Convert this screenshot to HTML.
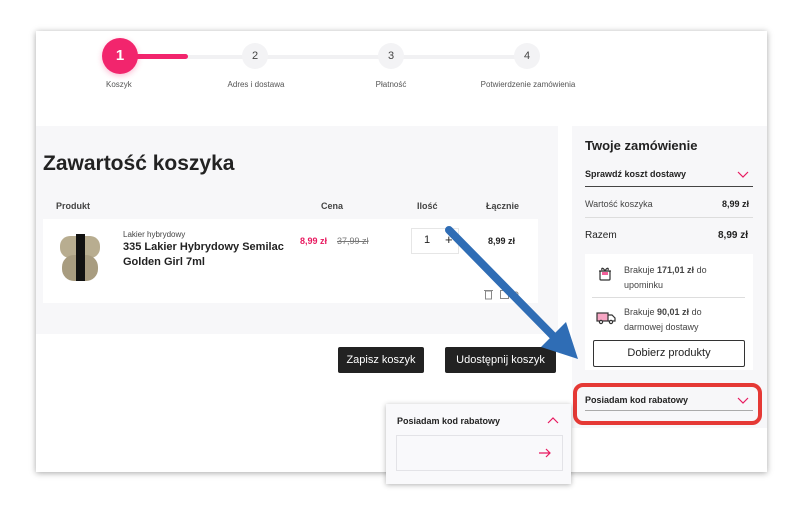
<!DOCTYPE html>
<html><head><meta charset="utf-8"><style>
*{box-sizing:border-box;margin:0;padding:0}
body{width:800px;height:508px;background:#fff;position:relative;font-family:"Liberation Sans",sans-serif;color:#222;overflow:hidden}
.frame{position:absolute;left:36px;top:31px;width:731px;height:441px;background:#fff;box-shadow:0 1px 6px rgba(0,0,0,.35)}
.a{position:absolute}
.t{font-size:8px;color:#555}
.circ{position:absolute;width:26px;height:26px;border-radius:50%;background:#f3f3f5;font-size:11px;color:#444;text-align:center;line-height:26px}
.b{font-weight:bold}
.btn{position:absolute;background:#222;color:#fff;font-size:11px;text-align:center;border-radius:2px}
</style></head><body>
<div class="frame"></div>
<div class="a" style="left:120px;top:55px;width:410px;height:4px;background:#f1f1f3"></div>
<div class="a" style="left:120px;top:54px;width:68px;height:5px;background:#f2256d;border-radius:3px"></div>
<div class="a" style="left:102px;top:38px;width:36px;height:36px;border-radius:50%;background:#f2256d;color:#fff;font-weight:bold;font-size:15px;text-align:center;line-height:36px;box-shadow:0 2px 6px rgba(242,37,109,.3)">1</div>
<div class="circ" style="left:242px;top:43px">2</div>
<div class="circ" style="left:378px;top:43px">3</div>
<div class="circ" style="left:514px;top:43px">4</div>
<div class="a t" style="left:106px;top:80px">Koszyk</div>
<div class="a t" style="left:211px;top:80px;width:90px;text-align:center">Adres i dostawa</div>
<div class="a t" style="left:370px;top:80px;width:42px;text-align:center">Płatność</div>
<div class="a t" style="left:468px;top:80px;width:120px;text-align:center">Potwierdzenie zamówienia</div>
<div class="a" style="left:36px;top:126px;width:522px;height:208px;background:#f7f7f9"></div>
<div class="a b" style="left:43px;top:152px;font-size:21px;color:#222">Zawartość koszyka</div>
<div class="a b" style="left:56px;top:201px;font-size:9px;color:#444">Produkt</div>
<div class="a b" style="left:321px;top:201px;font-size:9px;color:#444">Cena</div>
<div class="a b" style="left:417px;top:201px;font-size:9px;color:#444">Ilość</div>
<div class="a b" style="left:486px;top:201px;font-size:9px;color:#444">Łącznie</div>
<div class="a" style="left:43px;top:219px;width:495px;height:84px;background:#fff"></div>
<div class="a" style="left:60px;top:236px;width:40px;height:22px;border-radius:10px;background:#b8ad90"></div>
<div class="a" style="left:62px;top:255px;width:36px;height:26px;border-radius:12px;background:#a89c80"></div>
<div class="a" style="left:76px;top:234px;width:9px;height:47px;background:#111"></div>
<div class="a" style="left:123px;top:230px;font-size:8px;color:#444">Lakier hybrydowy</div>
<div class="a b" style="left:123px;top:240px;font-size:11px;line-height:15px;color:#222">335 Lakier Hybrydowy Semilac<br>Golden Girl 7ml</div>
<div class="a b" style="left:300px;top:236px;font-size:9px;color:#e8195f">8,99 zł</div>
<div class="a" style="left:337px;top:236px;font-size:9px;color:#777;text-decoration:line-through">37,99 zł</div>
<div class="a" style="left:411px;top:228px;width:48px;height:26px;border:1px solid #e6e6e6;background:#fff"></div>
<div class="a" style="left:424px;top:234px;font-size:11px">1</div>
<div class="a" style="left:445px;top:232px;font-size:13px">+</div>
<div class="a b" style="left:488px;top:236px;font-size:9px">8,99 zł</div>
<svg class="a" style="left:483px;top:288px" width="40" height="12" fill="none" stroke="#888" stroke-width="1"><rect x="2.5" y="3" width="6" height="8"/><line x1="1" y1="2.5" x2="10" y2="2.5"/><rect x="17.5" y="2.5" width="8" height="8"/><path d="M33 10l-2-4a2 2 0 0 1 4 0z"/></svg>
<div class="btn" style="left:338px;top:347px;width:86px;height:26px;line-height:26px">Zapisz koszyk</div>
<div class="btn" style="left:445px;top:347px;width:111px;height:26px;line-height:26px">Udostępnij koszyk</div>
<div class="a" style="left:572px;top:126px;width:195px;height:302px;background:#f7f7f9"></div>
<div class="a b" style="left:585px;top:138px;font-size:13px">Twoje zamówienie</div>
<div class="a b" style="left:585px;top:169px;font-size:9px">Sprawdź koszt dostawy</div>
<svg class="a" style="left:737px;top:171px" width="12" height="8"><path d="M1 1l5 5 5-5" fill="none" stroke="#e8195f" stroke-width="1.2"/></svg>
<div class="a" style="left:585px;top:186px;width:168px;height:1px;background:#444"></div>
<div class="a" style="left:585px;top:199px;font-size:9px;color:#444">Wartość koszyka</div>
<div class="a b" style="left:722px;top:199px;font-size:9px">8,99 zł</div>
<div class="a" style="left:585px;top:217px;width:168px;height:1px;background:#ddd"></div>
<div class="a" style="left:585px;top:230px;font-size:10px">Razem</div>
<div class="a b" style="left:718px;top:230px;font-size:10px">8,99 zł</div>
<div class="a" style="left:585px;top:254px;width:168px;height:116px;background:#fff"></div>
<svg class="a" style="left:597px;top:266px" width="16" height="16" fill="none" stroke="#333" stroke-width="1.2"><rect x="3" y="5" width="10" height="9" rx="1"/><line x1="2" y1="5" x2="14" y2="5"/><rect x="5" y="6" width="6" height="3" fill="#f2609a" stroke="none"/><path d="M8 5C6 1 4 2 5 4M8 5c2-4 4-3 3-1"/></svg>
<div class="a" style="left:624px;top:263px;font-size:9px;line-height:15px;color:#444">Brakuje <b>171,01 zł</b> do<br>upominku</div>
<div class="a" style="left:592px;top:297px;width:153px;height:1px;background:#ddd"></div>
<svg class="a" style="left:596px;top:311px" width="20" height="14" fill="none" stroke="#333" stroke-width="1.2"><rect x="1" y="2" width="11" height="8" fill="#f7a6c4"/><path d="M12 4h4l3 3v3h-7"/><circle cx="5" cy="11" r="1.6" fill="#fff"/><circle cx="15" cy="11" r="1.6" fill="#fff"/></svg>
<div class="a" style="left:624px;top:305px;font-size:9px;line-height:15px;color:#444">Brakuje <b>90,01 zł</b> do<br>darmowej dostawy</div>
<div class="a" style="left:593px;top:340px;width:152px;height:27px;border:1px solid #333;border-radius:2px;font-size:11px;text-align:center;line-height:25px;background:#fff">Dobierz produkty</div>
<div class="a" style="left:573px;top:383px;width:189px;height:42px;border:4px solid #e53935;border-radius:10px"></div>
<div class="a b" style="left:585px;top:395px;font-size:9px">Posiadam kod rabatowy</div>
<svg class="a" style="left:737px;top:397px" width="12" height="8"><path d="M1 1l5 5 5-5" fill="none" stroke="#e8195f" stroke-width="1.2"/></svg>
<div class="a" style="left:585px;top:410px;width:168px;height:1px;background:#aaa"></div>
<div class="a" style="left:386px;top:404px;width:185px;height:80px;background:#f9f9fb;box-shadow:0 1px 5px rgba(0,0,0,.3)"></div>
<div class="a b" style="left:397px;top:416px;font-size:9px">Posiadam kod rabatowy</div>
<svg class="a" style="left:547px;top:417px" width="12" height="8"><path d="M1 6l5-5 5 5" fill="none" stroke="#e8195f" stroke-width="1.2"/></svg>
<div class="a" style="left:396px;top:435px;width:167px;height:36px;border:1px solid #e3e3e7;background:#f9f9fb"></div>
<svg class="a" style="left:538px;top:448px" width="14" height="10"><path d="M1 5h11M8 1l4 4-4 4" fill="none" stroke="#e8195f" stroke-width="1.2"/></svg>
<svg class="a" style="left:0;top:0" width="800" height="508"><line x1="449" y1="230" x2="557" y2="340" stroke="#2f6db5" stroke-width="8" stroke-linecap="round"/><polygon points="578,359 541,347 566,322" fill="#2f6db5"/></svg>
</body></html>
